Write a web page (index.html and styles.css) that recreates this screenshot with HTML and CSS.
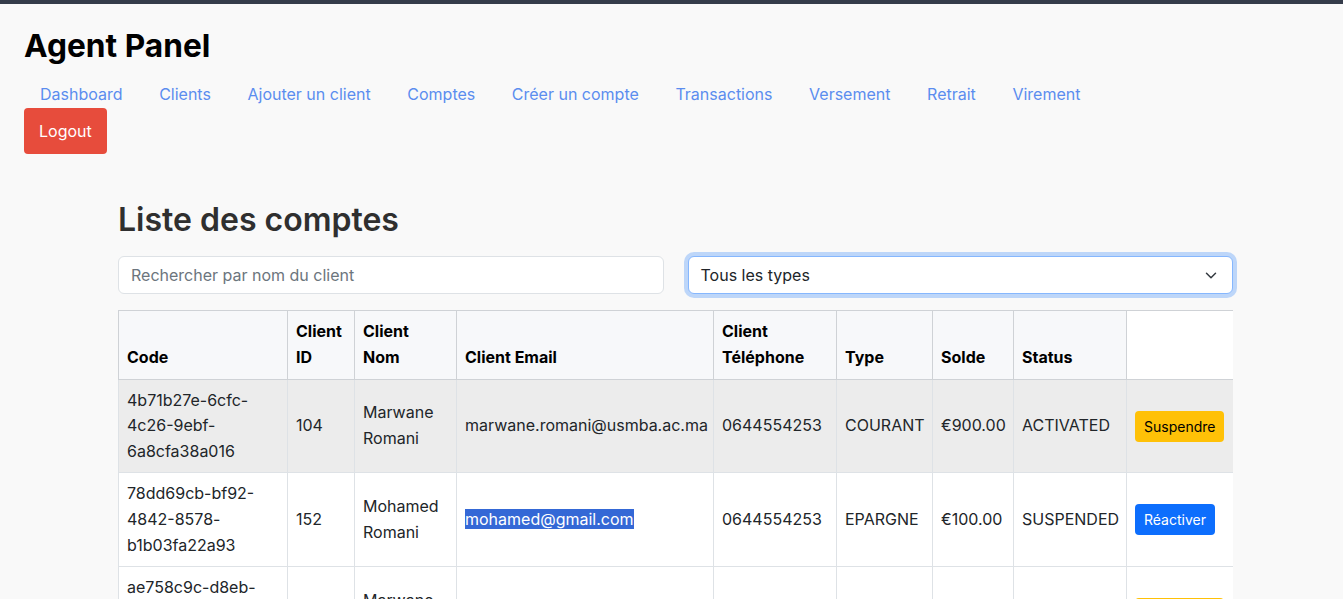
FILE: index.html
```html
<!DOCTYPE html>
<html lang="fr">
<head>
<meta charset="utf-8">
<title>Agent Panel</title>
<link rel="stylesheet" href="styles.css">
</head>
<body>
<div class="topbar"></div>
<header class="agent-header">
  <h1 class="brand">Agent Panel</h1>
  <nav class="nav">
    <a href="#">Dashboard</a>
    <a href="#">Clients</a>
    <a href="#">Ajouter un client</a>
    <a href="#">Comptes</a>
    <a href="#">Créer un compte</a>
    <a href="#">Transactions</a>
    <a href="#">Versement</a>
    <a href="#">Retrait</a>
    <a href="#">Virement</a>
  </nav>
  <button class="logout">Logout</button>
</header>

<main class="page">
  <section class="content">
    <h2 class="title">Liste des comptes</h2>
    <div class="filters">
      <div class="field input-like placeholder">Rechercher par nom du client</div>
      <div class="field select-like focused">
        <span>Tous les types</span>
        <svg class="chevron" width="12" height="9" viewBox="0 0 16 12" aria-hidden="true">
          <path d="m2 3 6 6 6-6" fill="none" stroke="#343a40" stroke-width="2" stroke-linecap="round" stroke-linejoin="round"/>
        </svg>
      </div>
    </div>

    <div class="table-wrap">
      <table class="accounts">
        <colgroup>
          <col class="c-code"><col class="c-id"><col class="c-nom"><col class="c-email"><col class="c-tel"><col class="c-type"><col class="c-solde"><col class="c-status"><col class="c-action">
        </colgroup>
        <thead>
          <tr>
            <th>Code</th>
            <th>Client ID</th>
            <th>Client Nom</th>
            <th>Client Email</th>
            <th>Client Téléphone</th>
            <th>Type</th>
            <th>Solde</th>
            <th>Status</th>
          </tr>
        </thead>
        <tbody>
          <tr class="hover">
            <td>4b71b27e-6cfc-4c26-9ebf-6a8cfa38a016</td>
            <td>104</td>
            <td>Marwane Romani</td>
            <td>marwane.romani@usmba.ac.ma</td>
            <td>0644554253</td>
            <td>COURANT</td>
            <td>€900.00</td>
            <td>ACTIVATED</td>
            <td><button class="btn-sm warn">Suspendre</button></td>
          </tr>
          <tr>
            <td>78dd69cb-bf92-4842-8578-b1b03fa22a93</td>
            <td>152</td>
            <td>Mohamed Romani</td>
            <td><span class="selected">mohamed@gmail.com</span></td>
            <td>0644554253</td>
            <td>EPARGNE</td>
            <td>€100.00</td>
            <td>SUSPENDED</td>
            <td><button class="btn-sm primary">Réactiver</button></td>
          </tr>
          <tr>
            <td>ae758c9c-d8eb-4f1a-9c3e-2b7d5e8a1c40</td>
            <td>104</td>
            <td>Marwane Romani</td>
            <td>marwane.romani@usmba.ac.ma</td>
            <td>0644554253</td>
            <td>EPARGNE</td>
            <td>€500.00</td>
            <td>ACTIVATED</td>
            <td><button class="btn-sm warn">Suspendre</button></td>
          </tr>
        </tbody>
      </table>
    </div>
  </section>
</main>
</body>
</html>
```
FILE: styles.css
```css
* { box-sizing: border-box; }

html, body {
  margin: 0;
  padding: 0;
}

body {
  background: #f9f9f9;
  font-family: Inter, "Noto Sans", "Liberation Sans", sans-serif;
  font-size: 16px;
  line-height: 1.5;
  color: #212529;
}

.topbar {
  height: 4px;
  background: #353c4a;
}

.agent-header {
  padding: 0 24px;
}

.brand {
  margin: 0;
  padding-top: 23px;
  font-size: 31.7px;
  line-height: 1.2;
  font-weight: 700;
  color: #000;
}

.nav {
  display: flex;
  flex-wrap: wrap;
  gap: 0 4.6px;
  margin-top: 17px;
}

.nav a {
  padding: 0 16px;
  line-height: 24px;
  color: #5b8def;
  text-decoration: none;
}

.logout {
  display: block;
  margin-top: 2px;
  padding: 11px 15px;
  border: none;
  border-radius: 4px;
  background: #e74c3c;
  color: #fff;
  font-family: inherit;
  font-size: 16px;
  line-height: 24px;
}

.page {
  padding: 0 24px;
}

.content {
  width: 1115px;
  margin-left: 94px;
  padding-top: 47px;
}

.title {
  margin: 0 0 17px;
  font-size: 32px;
  line-height: 1.2;
  font-weight: 600;
  color: #2f2f2f;
}

.filters {
  display: grid;
  grid-template-columns: 1fr 1fr;
  gap: 24px;
  margin-bottom: 16px;
}

.field {
  height: 38px;
  padding: 6px 12px;
  border: 1px solid #dee2e6;
  border-radius: 6px;
  background: #fff;
  line-height: 24px;
}

.placeholder {
  color: #6c757d;
}

.select-like {
  display: flex;
  align-items: center;
  justify-content: space-between;
  color: #212529;
}

.focused {
  border-color: #86b7fe;
  box-shadow: 0 0 0 4px rgba(13, 110, 253, 0.25);
}

.chevron {
  margin-right: 3px;
}

.table-wrap {
  overflow: hidden;
}

.accounts {
  width: 1115px;
  table-layout: fixed;
  border-collapse: collapse;
  background: #fff;
  line-height: 1.6;
}

.c-code { width: 169px; }
.c-id { width: 67px; }
.c-nom { width: 102px; }
.c-email { width: 257px; }
.c-tel { width: 123px; }
.c-type { width: 96px; }
.c-solde { width: 81px; }
.c-status { width: 113px; }
.c-action { width: 107px; }

.accounts tr {
  border-top: 1px solid #dee2e6;
  border-bottom: 1px solid #dee2e6;
}

.accounts thead tr {
  border-top-color: #cfd2d6;
  border-bottom-color: #cfd2d6;
  background: #f9f9f9;
}

.accounts th {
  padding: 8px;
  text-align: left;
  vertical-align: bottom;
  font-weight: 700;
  color: #000;
  background: #f7f8fa;
  border-left: 1px solid #cfd2d6;
  border-right: 1px solid #cfd2d6;
}

.accounts td {
  padding: 8px;
  vertical-align: middle;
  border-left: 1px solid #dee2e6;
  border-right: 1px solid #dee2e6;
  white-space: normal;
}

.accounts tr.hover td {
  background: #ececec;
}

.selected {
  background: #3468d6;
  color: #fff;
}

.btn-sm {
  padding: 4px 8px;
  border: 1px solid transparent;
  border-radius: 4px;
  font-family: inherit;
  font-size: 14px;
  line-height: 21px;
}

.btn-sm.warn {
  background: #ffc107;
  color: #000;
}

.btn-sm.primary {
  background: #0d6efd;
  color: #fff;
}
```
